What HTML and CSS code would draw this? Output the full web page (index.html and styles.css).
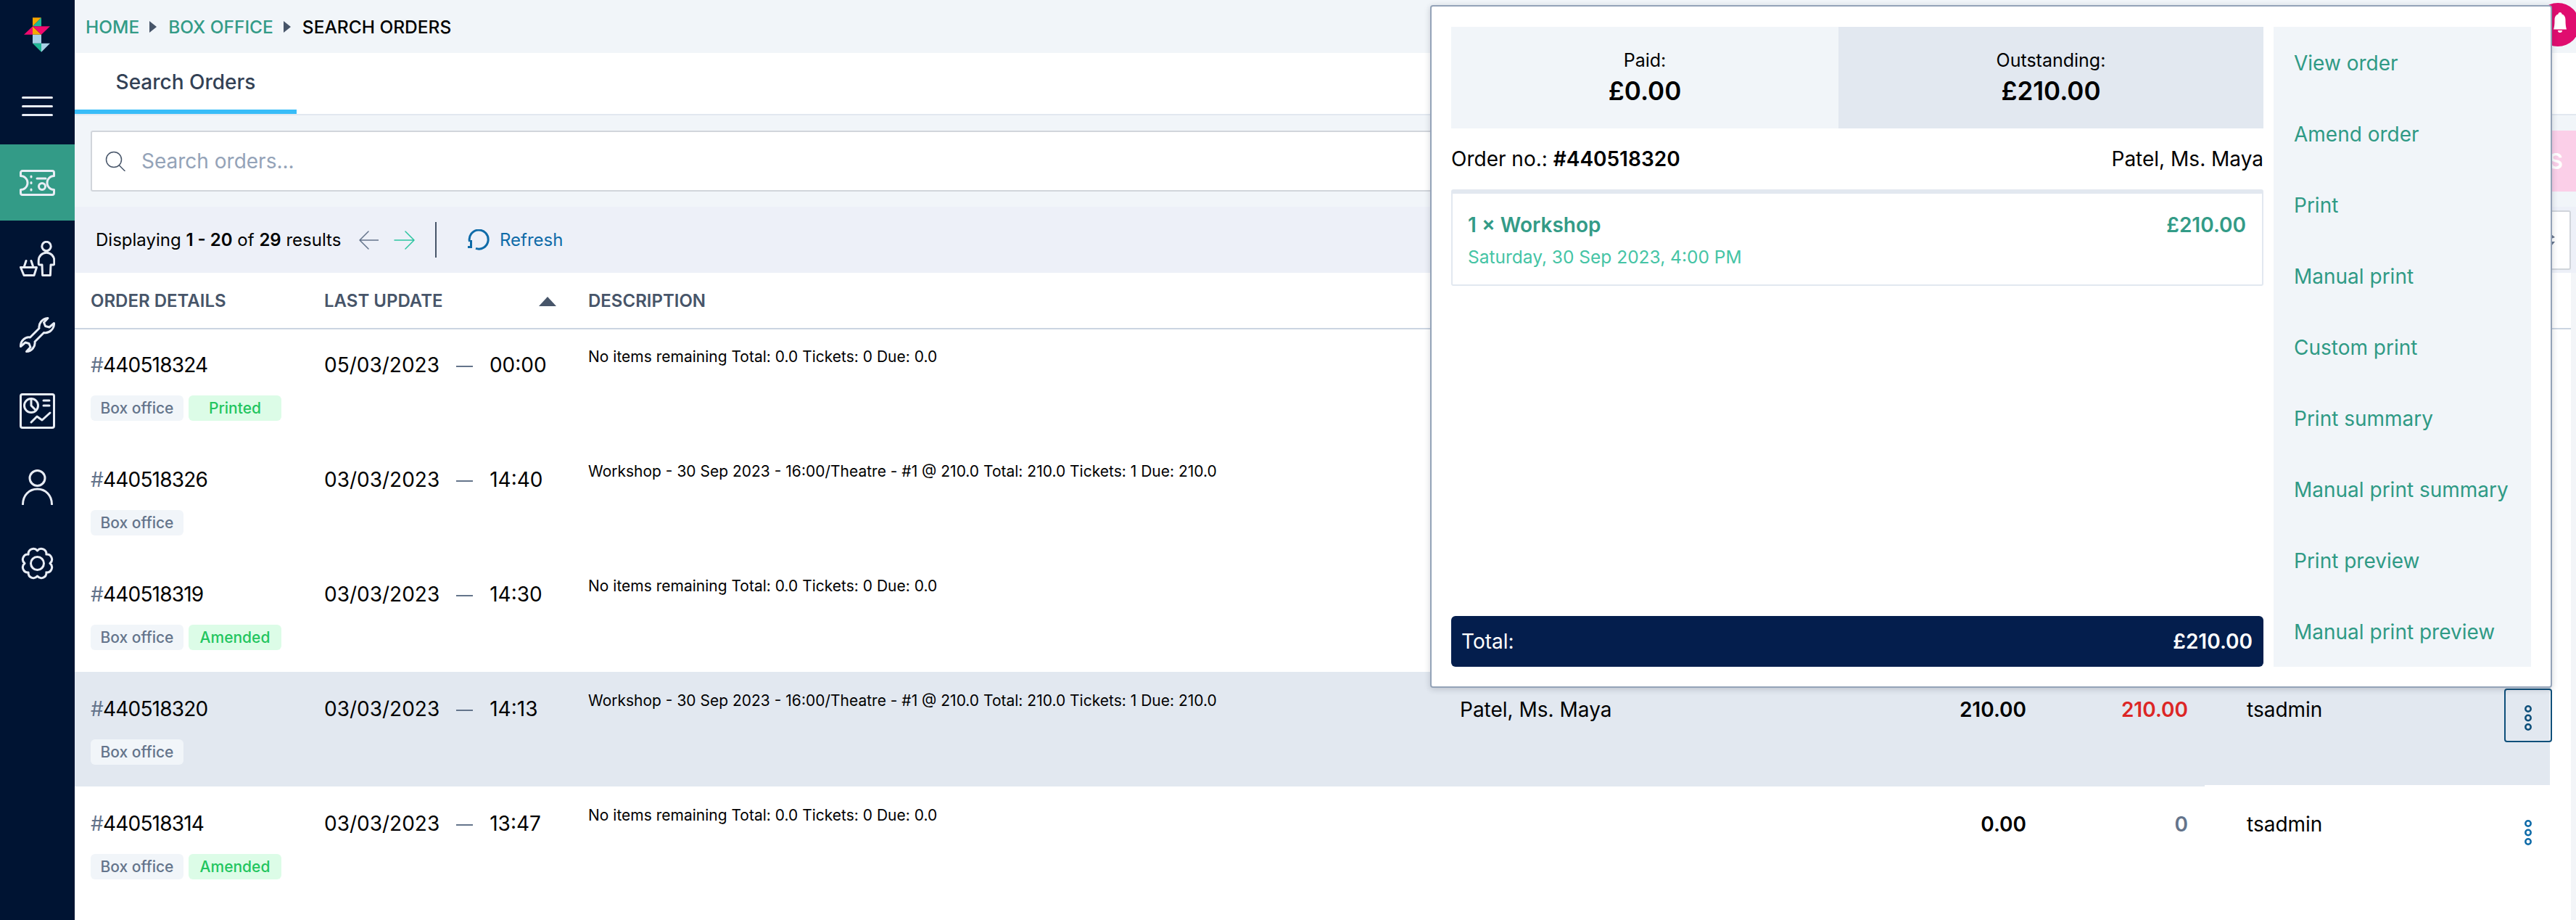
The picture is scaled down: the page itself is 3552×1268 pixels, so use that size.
FILE: index.html
```html
<!DOCTYPE html>
<html lang="en">
  <head>
    <meta charset="UTF-8" />
    <title>Search Orders</title>
    <link rel="stylesheet" href="styles.css">
  </head>
  <body>
    <aside class="sidebar">
      <div class="logo">
        <svg width="36" height="48" viewBox="0 0 108 143">
          <polygon points="36,0 72,0 36,36" fill="#f7a600" />
          <polygon points="72,0 72,36 36,36" fill="#1fb795" />
          <polygon points="0,71 36,36 36,71" fill="#f0096f" />
          <polygon points="36,36 72,71 36,71" fill="#f7a600" />
          <polygon points="36,36 108,36 72,71" fill="#f0096f" />
          <rect x="36" y="71" width="36" height="36" fill="#a8d0e6" />
          <polygon points="36,107 72,107 72,143" fill="#1fb795" />
          <polygon points="72,107 108,107 72,143" fill="#a8d0e6" />
        </svg>
      </div>
      <nav>
        <a class="nav-item">
          <svg width="43" height="27" viewBox="0 0 43 27"><path d="M1.500 1.500h40M1.500 13.500h40M1.500 25.500h40" /></svg>
        </a>
        <a class="nav-item active">
          <svg width="49" height="36" viewBox="0 0 49 36">
            <path d="M4 1.500h41a2.500 2.500 0 0 1 2.500 2.500v4.500a9.500 9.500 0 0 0 0 19V32a2.500 2.500 0 0 1-2.500 2.500H4A2.500 2.500 0 0 1 1.500 32v-4.500a9.500 9.500 0 0 0 0-19V4A2.500 2.500 0 0 1 4 1.500z" />
            <path d="M24 12h12M16 9v1M16 17.500v1M16 27v1" />
            <circle cx="31" cy="23" r="4.500" />
          </svg>
        </a>
        <a class="nav-item">
          <svg width="49" height="49" viewBox="0 0 49 49">
            <circle cx="37" cy="7.500" r="6.200" />
            <path d="M31 33h-3a1.800 1.800 0 0 1-1.800-1.800V27a10.800 10.800 0 0 1 21.600 0v4.200A1.800 1.800 0 0 1 46 33h-3l-.6 14.500H31.600z" />
            <path d="M1.500 36.500h22L20 47.500H6zM6 36.500l3-9M19 36.500l-3-9" />
          </svg>
        </a>
        <a class="nav-item">
          <svg width="49" height="49" viewBox="0 0 49 49">
            <path d="M14.500 28 27 15.500C26 9 31 2 39 1.500L33.500 7.500l2 5 5.500 1.500 6.500-5.500C48 16 41 23 33.500 21.500L21 34c1 6-4 13.500-11.500 13.500l5.500-6-2-5-5-1.500-6.500 5.500C1 33 8 26.500 14.500 28z" />
          </svg>
        </a>
        <a class="nav-item">
          <svg width="49" height="49" viewBox="0 0 49 49">
            <rect x="1.500" y="1.500" width="46" height="46" rx="2.500" />
            <circle cx="16" cy="17" r="9.500" />
            <path d="M16 8v9l6.500 6.500M33 10h8M33 17h8M16 40l8-8 7 5 11-10" />
          </svg>
        </a>
        <a class="nav-item">
          <svg width="43" height="49" viewBox="0 0 43 49">
            <circle cx="21.500" cy="12" r="10.500" />
            <path d="M1.500 48c0-12 8.500-21 20-21s20 9 20 21" />
          </svg>
        </a>
        <a class="nav-item">
          <svg width="49" height="49" viewBox="0 0 49 49">
            <path d="M42 24.500A7 7 0 0 1 36.870 36.870 7 7 0 0 1 24.500 42 7 7 0 0 1 12.130 36.870 7 7 0 0 1 7 24.500 7 7 0 0 1 12.130 12.130 7 7 0 0 1 24.500 7 7 7 0 0 1 36.870 12.130 7 7 0 0 1 42 24.500z" />
            <circle cx="24.500" cy="24.500" r="9" />
          </svg>
        </a>
      </nav>
    </aside>

    <main class="content">
      <div class="breadcrumb">
        <a>Home</a><span class="crumb-arrow"></span>
        <a>Box office</a><span class="crumb-arrow"></span>
        <span class="crumb-current">Search orders</span>
      </div>

      <div class="tabs">
        <div class="tab">Search Orders</div>
      </div>

      <div class="search-row">
        <div class="search-box">
          <svg class="search-icon" width="28" height="28" viewBox="0 0 28 28">
            <circle cx="12" cy="12" r="10.500" />
            <path d="M19.500 20l7.500 7.500" />
          </svg>
          <span class="placeholder">Search orders...</span>
        </div>
        <button class="search-btn">SEARCH ORDERS</button>
      </div>

      <div class="toolbar">
        <span class="results">Displaying <b>1 - 20</b> of <b>29</b> results</span>
        <svg class="pager" width="28" height="26" viewBox="0 0 28 26"><path d="M14 1 2 13l12 12M2 13h26" /></svg>
        <svg class="pager next" width="30" height="26" viewBox="0 0 30 26"><path d="M16 1l12 12-12 12M28 13H1" /></svg>
        <span class="divider"></span>
        <svg class="refresh-icon" width="31" height="30" viewBox="0 0 31 30">
          <path d="M2.500 17A13 13 0 1 1 11 26.400" />
          <path d="M4.500 15v9.500H0" />
        </svg>
        <span class="refresh">Refresh</span>
        <div class="filter-box">
          <svg width="5" height="16" viewBox="0 0 5 16"><path d="M0 0l5 4-5 2zM0 10l5 0-5 6z" /></svg>
        </div>
      </div>

      <div class="table">
        <div class="thead">
          <span class="col-order">Order details</span>
          <span class="col-date">Last update <i class="sort-up"></i></span>
          <span class="col-desc">Description</span>
        </div>

        <div class="rows">
          <div class="row">
            <div class="col-order">
              <div class="order-no"><span class="hash">#</span>440518324</div>
              <div class="chips"><span class="chip">Box office</span><span class="chip green">Printed</span></div>
            </div>
            <div class="col-date"><span>05/03/2023</span><span class="dash"></span><span>00:00</span></div>
            <div class="col-desc">No items remaining Total: 0.0 Tickets: 0 Due: 0.0</div>
          </div>
          <div class="row">
            <div class="col-order">
              <div class="order-no"><span class="hash">#</span>440518326</div>
              <div class="chips"><span class="chip">Box office</span></div>
            </div>
            <div class="col-date"><span>03/03/2023</span><span class="dash"></span><span>14:40</span></div>
            <div class="col-desc">Workshop - 30 Sep 2023 - 16:00/Theatre - #1 @ 210.0 Total: 210.0 Tickets: 1 Due: 210.0</div>
          </div>
          <div class="row">
            <div class="col-order">
              <div class="order-no"><span class="hash">#</span>440518319</div>
              <div class="chips"><span class="chip">Box office</span><span class="chip green">Amended</span></div>
            </div>
            <div class="col-date"><span>03/03/2023</span><span class="dash"></span><span>14:30</span></div>
            <div class="col-desc">No items remaining Total: 0.0 Tickets: 0 Due: 0.0</div>
          </div>
          <div class="row selected">
            <div class="col-order">
              <div class="order-no"><span class="hash">#</span>440518320</div>
              <div class="chips"><span class="chip">Box office</span></div>
            </div>
            <div class="col-date"><span>03/03/2023</span><span class="dash"></span><span>14:13</span></div>
            <div class="col-desc">Workshop - 30 Sep 2023 - 16:00/Theatre - #1 @ 210.0 Total: 210.0 Tickets: 1 Due: 210.0</div>
            <div class="col-name">Patel, Ms. Maya</div>
            <div class="col-amount">210.00</div>
            <div class="col-due red">210.00</div>
            <div class="col-user">tsadmin</div>
            <div class="col-menu open">
              <svg width="10" height="35" viewBox="0 0 10 35"><circle cx="5" cy="5" r="3.700" /><circle cx="5" cy="17.500" r="3.700" /><circle cx="5" cy="30" r="3.700" /></svg>
            </div>
          </div>
          <div class="row">
            <div class="col-order">
              <div class="order-no"><span class="hash">#</span>440518314</div>
              <div class="chips"><span class="chip">Box office</span><span class="chip green">Amended</span></div>
            </div>
            <div class="col-date"><span>03/03/2023</span><span class="dash"></span><span>13:47</span></div>
            <div class="col-desc">No items remaining Total: 0.0 Tickets: 0 Due: 0.0</div>
            <div class="col-name"></div>
            <div class="col-amount">0.00</div>
            <div class="col-due zero">0</div>
            <div class="col-user">tsadmin</div>
            <div class="col-menu">
              <svg width="10" height="35" viewBox="0 0 10 35"><circle cx="5" cy="5" r="3.700" /><circle cx="5" cy="17.500" r="3.700" /><circle cx="5" cy="30" r="3.700" /></svg>
            </div>
          </div>
        </div>
      </div>
    </main>

    <div class="bell">
      <svg width="18" height="31" viewBox="0 0 18 31"><path d="M9 0c1.500 0 2.500 1 2.500 2.500 3.500 1 5 4 5 8 0 6 .5 10 1.500 13H0c1-3 1.500-7 1.500-13 0-4 1.500-7 5-8C6.500 1 7.500 0 9 0zM6 25h6a3 3 0 0 1-6 0z" /></svg>
    </div>

    <div class="popup">
      <div class="popup-main">
        <div class="balance">
          <div class="paid"><span>Paid:</span><b>£0.00</b></div>
          <div class="outstanding"><span>Outstanding:</span><b>£210.00</b></div>
        </div>
        <div class="order-line">
          <span>Order no.: <b>#440518320</b></span>
          <span>Patel, Ms. Maya</span>
        </div>
        <div class="item-card">
          <div class="item-top"><span>1 × Workshop</span><span>£210.00</span></div>
          <div class="item-date">Saturday, 30 Sep 2023, 4:00 PM</div>
        </div>
        <div class="total-bar"><span>Total:</span><b>£210.00</b></div>
      </div>
      <ul class="popup-menu">
        <li>View order</li>
        <li>Amend order</li>
        <li>Print</li>
        <li>Manual print</li>
        <li>Custom print</li>
        <li>Print summary</li>
        <li>Manual print summary</li>
        <li>Print preview</li>
        <li>Manual print preview</li>
      </ul>
    </div>
  </body>
</html>
```

FILE: styles.css
```css
* {
  margin: 0;
  padding: 0;
  box-sizing: border-box;
}
body {
  display: flex;
  height: 1268px;
  overflow: hidden;
  position: relative;
  background-color: #ffffff;
  color: #000000;
  font-family: "Inter", "Liberation Sans", sans-serif;
}

/* sidebar */
.sidebar {
  width: 103px;
  flex: none;
  background-color: #001433;
}
.logo {
  height: 94px;
  padding: 24px 0 0 33px;
}
.nav-item {
  height: 105px;
  display: flex;
  justify-content: center;
  align-items: center;
}
.nav-item.active {
  background-color: #339b87;
}
.nav-item svg {
  fill: none;
  stroke: #e8edf5;
  stroke-width: 3;
  stroke-linecap: round;
  stroke-linejoin: round;
}

/* main column */
.content {
  flex: 1;
  min-width: 0;
  display: flex;
  flex-direction: column;
  background-color: #ffffff;
}
.breadcrumb {
  height: 73px;
  padding-left: 15px;
  display: flex;
  align-items: center;
  background-color: #f1f5f9;
  font-size: 24.5px;
  font-weight: 500;
  text-transform: uppercase;
  color: #339b87;
}
.crumb-arrow {
  width: 0;
  height: 0;
  margin: 0 16px 0 14px;
  border-left: 10px solid #475569;
  border-top: 8px solid transparent;
  border-bottom: 8px solid transparent;
}
.crumb-current {
  color: #000000;
}
.tabs {
  height: 86px;
  background-color: #ffffff;
  border-bottom: 2px solid #e2e8f0;
}
.tab {
  width: 306px;
  height: 84px;
  padding-top: 23px;
  text-align: center;
  font-size: 28px;
  font-weight: 500;
  color: #334155;
  border-bottom: 6px solid #38bdf8;
}
.search-row {
  height: 126px;
  padding: 21px 0 21px 22px;
  display: flex;
  background-color: #f1f5f9;
}
.search-box {
  flex: 1;
  display: flex;
  align-items: center;
  padding-left: 18px;
  background-color: #ffffff;
  border: 2px solid #d1d5db;
  border-radius: 3px;
}
.search-icon {
  fill: none;
  stroke: #475569;
  stroke-width: 1.5;
  stroke-linecap: round;
}
.placeholder {
  margin-left: 22px;
  font-size: 28px;
  color: #94a3b8;
}
.search-btn {
  width: 320px;
  padding-right: 18px;
  border: none;
  text-align: right;
  white-space: nowrap;
  font-family: inherit;
  font-size: 30px;
  font-weight: 600;
  color: #ffffff;
  background-color: #fbcfe8;
}

/* results toolbar */
.toolbar {
  height: 91px;
  padding-left: 29px;
  display: flex;
  align-items: center;
  background-color: #edf0f8;
}
.results {
  width: 362px;
  font-size: 24px;
}
.results b {
  font-weight: 600;
}
.pager {
  fill: none;
  stroke: #64748b;
  stroke-width: 1.5;
  stroke-linecap: round;
  stroke-linejoin: round;
}
.pager.next {
  margin-left: 21px;
  stroke: #2dc5a0;
}
.divider {
  width: 2px;
  height: 49px;
  margin: 0 43px 0 27px;
  background-color: #475569;
}
.refresh-icon {
  fill: none;
  stroke: #0f6ba8;
  stroke-width: 3;
}
.refresh {
  margin-left: 13px;
  font-size: 24px;
  color: #0f6ba8;
}
.filter-box {
  width: 300px;
  height: 82px;
  margin-left: auto;
  margin-right: 7px;
  padding-right: 20px;
  display: flex;
  align-items: center;
  justify-content: flex-end;
  background-color: #ffffff;
  border: 2px solid #d1d5db;
  border-radius: 3px;
}
.filter-box svg {
  fill: #64748b;
}

/* table */
.table {
  flex: 1;
  border-right: 7px solid #f3f5f8;
}
.thead {
  height: 78px;
  padding-left: 22px;
  display: flex;
  align-items: center;
  border-bottom: 2px solid #cbd5e1;
  font-size: 24px;
  font-weight: 600;
  text-transform: uppercase;
  color: #475569;
}
.thead .col-date {
  position: relative;
}
.sort-up {
  position: absolute;
  left: 296px;
  top: 9px;
  width: 0;
  height: 0;
  border-left: 12px solid transparent;
  border-right: 12px solid transparent;
  border-bottom: 13px solid #475569;
}
.col-order {
  width: 322px;
  flex: none;
}
.col-date {
  width: 364px;
  flex: none;
}
.col-desc {
  width: 1202px;
  flex: none;
}
.rows {
  margin-top: -2px;
}
.row {
  height: 158px;
  width: 3413px;
  padding: 0 0 0 22px;
  display: flex;
  align-items: flex-start;
  font-size: 28px;
}
.row.selected {
  position: relative;
  background-color: #e2e8f0;
}
.row.selected::after {
  content: "";
  position: absolute;
  right: 0;
  bottom: 0;
  width: 476px;
  height: 2px;
  background-color: #ffffff;
}
.order-no {
  margin-top: 33px;
  line-height: 36px;
  letter-spacing: -0.8px;
}
.hash {
  color: #64748b;
}
.chips {
  display: flex;
  gap: 7px;
  margin-top: 24px;
}
.chip {
  height: 35px;
  width: 128px;
  display: flex;
  align-items: center;
  justify-content: center;
  border-radius: 6px;
  font-size: 21px;
  font-weight: 500;
  color: #64748b;
  background-color: #f1f5f9;
}
.chip.green {
  color: #22c55e;
  background-color: #dcfce7;
}
.row .col-date {
  display: flex;
  align-items: center;
  margin-top: 33px;
  line-height: 36px;
}
.dash {
  width: 23px;
  height: 2px;
  margin: 3px 23px 0 23px;
  background-color: #64748b;
}
.row .col-desc {
  margin-top: 28px;
  font-size: 21px;
  line-height: 24px;
}
.col-name,
.col-amount,
.col-due,
.col-user {
  margin-top: 34px;
  line-height: 36px;
  flex: none;
}
.col-name {
  width: 300px;
}
.col-amount {
  width: 481px;
  text-align: right;
  font-weight: 600;
}
.col-due {
  width: 223px;
  text-align: right;
  font-weight: 600;
}
.col-due.red {
  color: #dc2626;
}
.col-due.zero {
  color: #64748b;
}
.col-user {
  width: 436px;
  padding-left: 81px;
}
.col-menu {
  position: relative;
  z-index: 1;
  flex: none;
  width: 66px;
  height: 74px;
  margin-top: 23px;
  padding-top: 6px;
  display: flex;
  align-items: center;
  justify-content: center;
}
.col-menu svg {
  fill: none;
  stroke: #0f6ba8;
  stroke-width: 2.5;
}
.col-menu.open {
  border: 2px solid #0e4f7a;
  border-radius: 4px;
}
.col-menu.open svg {
  stroke: #0e4f7a;
}

/* notification bell */
.bell {
  position: absolute;
  left: 3497px;
  top: 4px;
  width: 60px;
  height: 60px;
  padding: 13px 0 0 24px;
  border-radius: 50%;
  background-color: #e00d6f;
}
.bell svg {
  fill: #ffffff;
}

/* order popup */
.popup {
  position: absolute;
  z-index: 2;
  left: 1972px;
  top: 7px;
  width: 1547px;
  height: 941px;
  padding: 28px 27px 27px;
  display: flex;
  gap: 14px;
  background-color: #ffffff;
  border: 2px solid #94a3b8;
  border-radius: 4px;
  box-shadow: 0 2px 8px rgba(30, 41, 59, 0.2);
}
.popup-main {
  width: 1120px;
  display: flex;
  flex-direction: column;
  font-size: 28px;
}
.balance {
  display: flex;
  height: 140px;
  text-align: center;
}
.balance span {
  display: block;
  font-size: 25px;
  margin-bottom: 6px;
}
.balance b {
  font-size: 35px;
  font-weight: 600;
}
.paid {
  width: 534px;
  padding-top: 31px;
  background-color: #f1f5f9;
}
.outstanding {
  flex: 1;
  padding-top: 31px;
  background-color: #e2e8f0;
}
.order-line {
  height: 84px;
  display: flex;
  justify-content: space-between;
  align-items: center;
}
.order-line b {
  font-weight: 600;
}
.item-card {
  height: 133px;
  padding: 26px 22px 0 21px;
  border: 2px solid #e2e8f0;
  border-top-width: 6px;
  border-radius: 3px;
}
.item-top {
  display: flex;
  justify-content: space-between;
  font-weight: 600;
  color: #339b87;
}
.item-date {
  margin-top: 12px;
  font-size: 24.5px;
  color: #45c4a5;
}
.total-bar {
  height: 70px;
  margin-top: auto;
  padding: 0 15px 0 14px;
  display: flex;
  justify-content: space-between;
  align-items: center;
  border-radius: 6px;
  color: #ffffff;
  background-color: #041e4d;
}
.total-bar b {
  font-weight: 600;
}
.popup-menu {
  width: 355px;
  list-style: none;
  background-color: #f1f5f9;
}
.popup-menu li {
  height: 98px;
  padding: 2px 0 0 28px;
  display: flex;
  align-items: center;
  font-size: 28px;
  color: #2f9a85;
}
```
